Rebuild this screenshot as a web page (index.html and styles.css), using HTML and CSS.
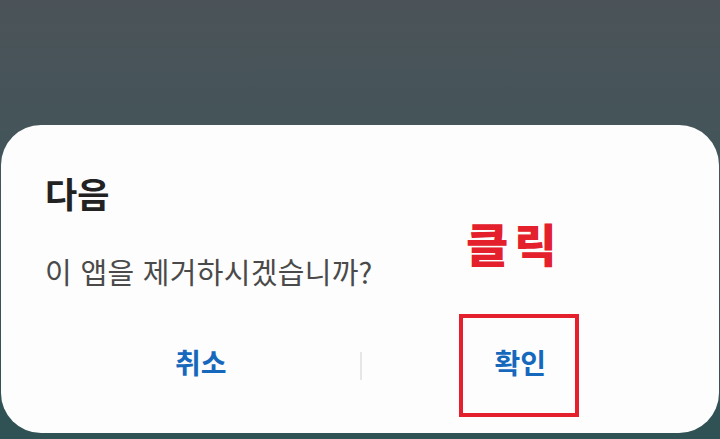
FILE: index.html
```html
<!DOCTYPE html>
<html lang="ko">
<head>
<meta charset="utf-8">
<link rel="stylesheet" href="styles.css">
</head>
<body>
<div class="screen">
  <div class="dialog">
    <h1 class="title">다음</h1>
    <p class="message">이 앱을 제거하시겠습니까?</p>
    <div class="actions">
      <div class="btn">취소</div>
      <div class="sep"></div>
      <div class="btn">확인</div>
    </div>
    <div class="note">클릭</div>
    <div class="highlight"></div>
  </div>
</div>
</body>
</html>
```
FILE: styles.css
```css
html, body {
  margin: 0;
  padding: 0;
}
body {
  width: 720px;
  height: 439px;
  overflow: hidden;
  font-family: "Noto Sans CJK KR", "Noto Sans", sans-serif;
}
.screen {
  width: 720px;
  height: 439px;
  background: linear-gradient(180deg, #4b5358 0%, #42555a 40%, #2f5254 100%);
  padding-top: 125px;
  padding-left: 1px;
  box-sizing: border-box;
}
.dialog {
  position: relative;
  width: 718px;
  height: 308px;
  background: #fdfdfd;
  border-radius: 40px;
  box-sizing: border-box;
  padding-top: 50px;
  display: flex;
  flex-direction: column;
}
.title {
  margin: 0 0 0 44px;
  font-size: 35px;
  line-height: 35px;
  font-weight: 700;
  color: #222;
}
.message {
  margin: 47px 0 0 44px;
  font-size: 29px;
  line-height: 29px;
  font-weight: 400;
  color: #4a4a4a;
  letter-spacing: 0.3px;
}
.actions {
  margin-top: 58px;
  padding: 0 40px 0 41px;
  display: flex;
  align-items: center;
}
.btn {
  flex: 1;
  text-align: center;
  font-size: 28px;
  line-height: 36px;
  font-weight: 700;
  color: #1668bc;
}
.sep {
  width: 2px;
  height: 28px;
  background: #e6e6e6;
  margin-top: 8px;
}
.note {
  position: absolute;
  left: 465px;
  top: 94px;
  font-size: 46px;
  line-height: 46px;
  font-weight: 900;
  color: #e3202c;
  letter-spacing: 6px;
}
.highlight {
  position: absolute;
  left: 458px;
  top: 189px;
  width: 120px;
  height: 103px;
  border: 4px solid #e3202c;
  box-sizing: border-box;
}
```
